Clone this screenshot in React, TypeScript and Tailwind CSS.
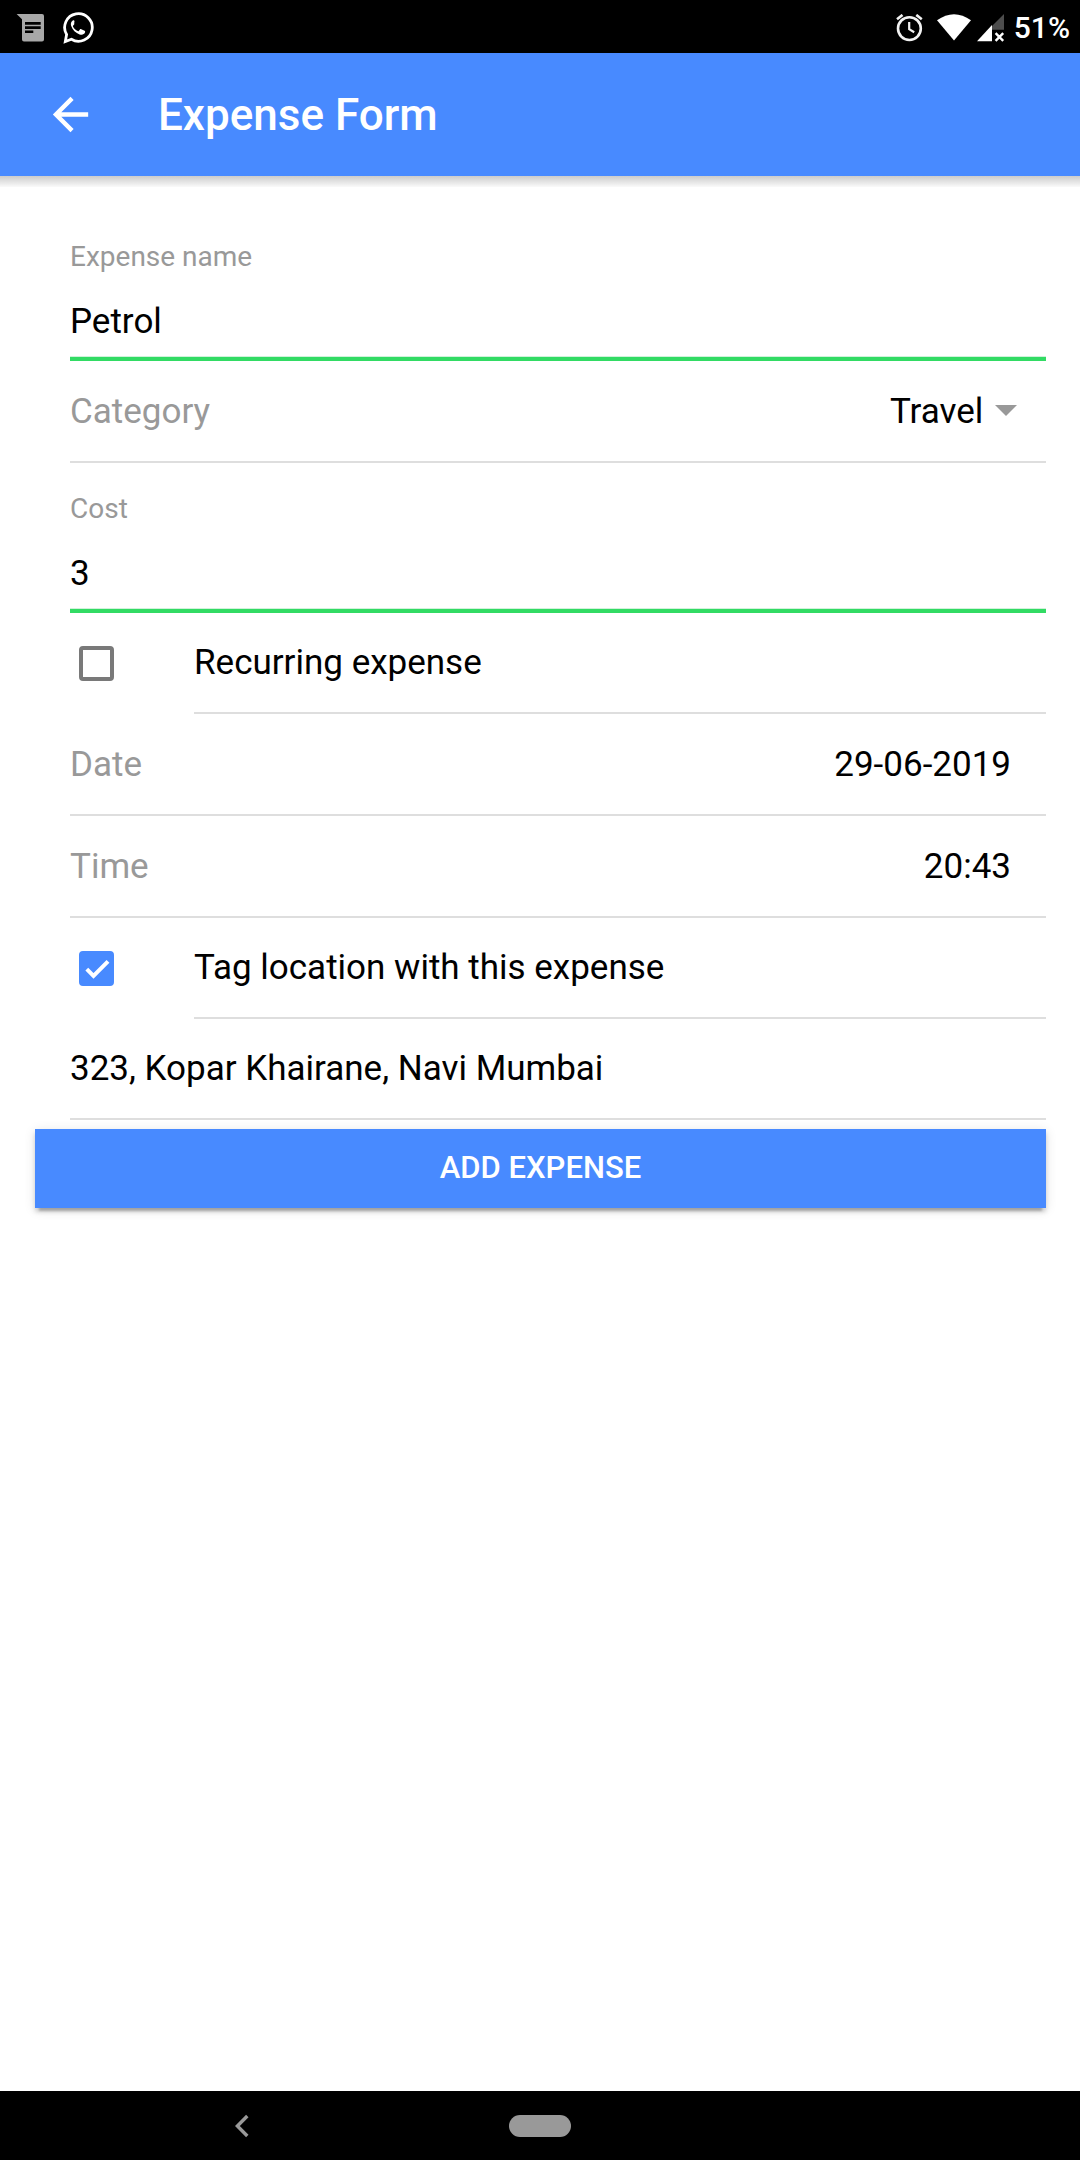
import { useState } from "react";
import type { ReactNode } from "react";

function MessageIcon() {
  return (
    <svg width="29" height="30" viewBox="0 0 29 30" aria-hidden="true">
      <path fill="#a8a8a8" d="M.6 1H26a2 2 0 0 1 2 2v23.5a2 2 0 0 1-2 2H8a2 2 0 0 1-2-2V6.2z" />
      <path fill="#000" d="M9 9h15.7v2.7H9zM9 13.3h15.7V16H9zM9 17.5h8.3v2.6H9z" />
    </svg>
  );
}

function WhatsAppIcon() {
  return (
    <svg width="33" height="34" viewBox="0 0 33 34" aria-hidden="true">
      <path
        fill="none"
        stroke="#fff"
        strokeWidth="2.8"
        d="M4.6 23.5A13.8 13.8 0 1 1 9.4 28.3L3.3 30.5z"
      />
      <path
        fill="#fff"
        d="M12.5 9.9c-.5-.9-1.2-.8-2-.2-1.6 1.3-2 3-1.3 5.2 1.3 3.9 4.5 7 8.4 8.5 2.4.8 4.6.2 5.4-1.8.3-.9.2-1.5-.4-1.8l-3.3-1.6c-.6-.3-1-.2-1.4.3l-1.1 1.4c-.3.4-.7.4-1.1.2-2-1-3.5-2.4-4.6-4.4-.2-.4-.2-.8.1-1.1l.9-1.1c.3-.4.3-.8.1-1.3z"
      />
    </svg>
  );
}

function AlarmIcon() {
  return (
    <svg width="27" height="28" viewBox="0 0 27 28" fill="none" stroke="#f2f2f2" strokeWidth="2.6" aria-hidden="true">
      <circle cx="13.4" cy="14.6" r="11.4" />
      <path d="M1 5.2 6.5.9M20.3.9l5.5 4.3" />
      <path strokeWidth="2.2" d="M13.2 8v7.2l5 3" />
    </svg>
  );
}

function WifiIcon() {
  return (
    <svg width="34" height="28" viewBox="0 0 34 28" aria-hidden="true">
      <path fill="#fff" d="M0 6.3Q17-6 34 6.3L17 26.6z" />
    </svg>
  );
}

function SignalIcon() {
  return (
    <svg width="28" height="28" viewBox="0 0 28 28" aria-hidden="true">
      <path fill="#4d4d4d" d="M15 12 27 0v15.7H15z" />
      <path fill="#fff" d="M0 27.3 15 11v16.3z" />
      <path stroke="#fff" strokeWidth="2.4" d="m18.6 19.2 7.6 7.6M26.2 19.2l-7.6 7.6" />
    </svg>
  );
}

function StackedField(props: { id: string; label: string; defaultValue: string }) {
  return (
    <div className="ml-[35px] flex flex-col border-b-4 border-[#32db64] pt-7 pb-1.5 shadow-[inset_0_-1px_#d0f2da]">
      <label htmlFor={props.id} className="text-[28px] leading-[36px] text-[#999]">
        {props.label}
      </label>
      <input
        id={props.id}
        type="text"
        defaultValue={props.defaultValue}
        className="mt-4 h-[60px] w-full bg-transparent text-[35px] outline-none"
      />
    </div>
  );
}

function InlineRow(props: { id: string; label: string; children: ReactNode }) {
  return (
    <div className="ml-[35px] flex h-[102px] items-center justify-between border-b-2 border-[#dedede] pt-0.5">
      <label htmlFor={props.id} className="text-[35px] text-[#999]">
        {props.label}
      </label>
      {props.children}
    </div>
  );
}

function CheckRow(props: { id: string; label: string; initial: boolean }) {
  const [checked, setChecked] = useState(props.initial);
  return (
    <div className="ml-11 flex items-center gap-20">
      <span className="relative block size-[35px] shrink-0">
        <input
          id={props.id}
          type="checkbox"
          checked={checked}
          onChange={() => setChecked(!checked)}
          className="block size-[35px] appearance-none rounded-sm border-4 border-[#797979] checked:border-[#488aff] checked:bg-[#488aff]"
        />
        {checked && (
          <svg
            className="pointer-events-none absolute inset-0"
            width="35"
            height="35"
            viewBox="0 0 35 35"
            fill="none"
            stroke="#fff"
            strokeWidth="4"
            aria-hidden="true"
          >
            <path d="m7.8 18.2 6.7 6.7L29 10.4" />
          </svg>
        )}
      </span>
      <label
        htmlFor={props.id}
        className="flex h-[101px] flex-1 items-center border-b-2 border-[#dedede] pt-0.5 text-[35px]"
      >
        {props.label}
      </label>
    </div>
  );
}

export default function App() {
  return (
    <div className="flex min-h-screen flex-col bg-white font-[Roboto,sans-serif] text-black">
      <div className="flex h-[53px] items-center justify-between bg-black pt-0.5 pr-[10px] pl-4">
        <div className="flex items-center gap-[17px]">
          <MessageIcon />
          <WhatsAppIcon />
        </div>
        <div className="flex items-center">
          <AlarmIcon />
          <span className="ml-[14px]">
            <WifiIcon />
          </span>
          <span className="ml-[6px]">
            <SignalIcon />
          </span>
          <span className="ml-[9px] text-[30px] leading-none font-medium text-white">51%</span>
        </div>
      </div>

      <header className="relative flex h-[123px] items-center bg-[#488aff] pl-11 text-white after:absolute after:inset-x-0 after:top-full after:h-[11px] after:bg-linear-to-b after:from-black/20 after:to-black/2">
        <button type="button" aria-label="Back" className="block">
          <svg width="53" height="53" viewBox="0 0 24 24" fill="currentColor" aria-hidden="true">
            <path d="M20 11H7.83l5.59-5.59L12 4l-8 8 8 8 1.41-1.41L7.83 13H20v-2z" />
          </svg>
        </button>
        <h1 className="ml-[61px] text-[44px] leading-none font-medium">Expense Form</h1>
      </header>

      <main className="flex-1 pt-[35px] pr-[34px] pl-[35px]">
        <form onSubmit={(e) => e.preventDefault()}>
          <StackedField id="name" label="Expense name" defaultValue="Petrol" />
          <InlineRow id="category" label="Category">
            <span className="relative">
              <select
                id="category"
                defaultValue="Travel"
                className="appearance-none bg-transparent pr-[62px] text-[35px] outline-none"
              >
                <option>Travel</option>
              </select>
              <svg
                className="pointer-events-none absolute top-1/2 right-[29px] -translate-y-1/2"
                width="22"
                height="14"
                viewBox="0 0 22 14"
                aria-hidden="true"
              >
                <path fill="#999" d="M0 0h22L11 11z" />
              </svg>
            </span>
          </InlineRow>
          <StackedField id="cost" label="Cost" defaultValue="3" />
          <CheckRow id="recurring" label="Recurring expense" initial={false} />
          <InlineRow id="date" label="Date">
            <input
              id="date"
              type="text"
              defaultValue="29-06-2019"
              className="w-1/2 bg-transparent pr-[35px] text-right text-[35px] outline-none"
            />
          </InlineRow>
          <InlineRow id="time" label="Time">
            <input
              id="time"
              type="text"
              defaultValue="20:43"
              className="w-1/2 bg-transparent pr-[35px] text-right text-[35px] outline-none"
            />
          </InlineRow>
          <CheckRow id="tag" label="Tag location with this expense" initial={true} />
          <div className="ml-[35px] flex h-[101px] items-center border-b-2 border-[#dedede] pt-0.5">
            <input
              type="text"
              aria-label="Location"
              defaultValue="323, Kopar Khairane, Navi Mumbai"
              className="w-full bg-transparent text-[35px] outline-none"
            />
          </div>
          <button
            type="submit"
            className="mt-[9px] flex h-[79px] w-full items-center justify-center bg-[#488aff] text-[31px] font-medium text-white uppercase shadow-[0_4px_4px_rgba(0,0,0,0.14),0_7px_2px_-4px_rgba(0,0,0,0.2),0_2px_11px_rgba(0,0,0,0.12)]"
          >
            Add Expense
          </button>
        </form>
      </main>

      <nav className="grid h-[69px] grid-cols-3 items-center justify-items-center bg-black">
        <button type="button" aria-label="Back" className="ml-[123px]">
          <svg width="14" height="24" viewBox="0 0 14 24" fill="none" stroke="#999" strokeWidth="3.4" aria-hidden="true">
            <path d="M12.3 2 2.4 12l9.9 10" />
          </svg>
        </button>
        <button type="button" aria-label="Home" className="h-[22px] w-[62px] rounded-full bg-[#999]" />
      </nav>
    </div>
  );
}
